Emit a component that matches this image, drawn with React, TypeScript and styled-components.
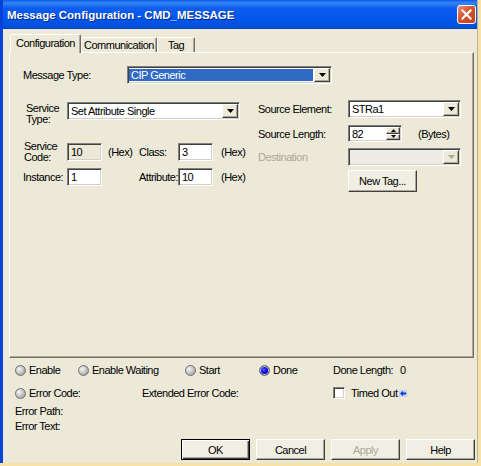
import React from "react";
import styled, { createGlobalStyle, css } from "styled-components";

const GlobalStyle = createGlobalStyle`
  html, body {
    margin: 0;
    padding: 0;
    background: #f5e2a4;
  }
  body {
    font-family: "Liberation Sans", Arial, sans-serif;
    font-size: 11px;
    letter-spacing: -0.5px;
    color: #000;
  }
`;

const sunken = css`
  box-sizing: border-box;
  border: 1px solid;
  border-color: #808080 #fff #fff #808080;
  box-shadow: inset 1px 1px #404040, inset -1px -1px #d4d0c8;
`;

const raised = css`
  box-sizing: border-box;
  border: 1px solid;
  border-color: #fff #404040 #404040 #fff;
  box-shadow: inset -1px -1px #aca899;
`;

const Window = styled.div`
  width: 478px;
  height: 463px;
  box-sizing: border-box;
  background: #ece9d8;
  border-left: 3px solid #0842d9;
  border-right: 1px solid #b9b39c;
  display: flex;
  flex-direction: column;
  overflow: hidden;
`;

const TitleBar = styled.div`
  height: 29px;
  flex: none;
  display: flex;
  align-items: center;
  justify-content: space-between;
  padding: 0 0 0 4px;
  background: linear-gradient(
    #0a5ae8 0%,
    #3784f5 10%,
    #0d5eee 28%,
    #0055ea 70%,
    #0050de 90%,
    #0043c0 100%
  );
`;

const Title = styled.span`
  color: #fff;
  font-weight: bold;
  font-size: 11.5px;
  letter-spacing: 0;
  text-shadow: 1px 1px #0a2a8a;
`;

const CloseButton = styled.div`
  width: 19px;
  height: 19px;
  margin-right: 1px;
  box-sizing: border-box;
  border: 1px solid #fff;
  border-radius: 3px;
  background: linear-gradient(135deg, #e9907a 0%, #d6532f 45%, #c2401c 100%);
  display: flex;
  align-items: center;
  justify-content: center;
`;

const TabStrip = styled.div`
  display: flex;
  align-items: flex-end;
  height: 19px;
  margin: 5px 0 0 7px;
  position: relative;
  z-index: 1;
`;

const Tab = styled.div<{ $active?: boolean; $w: number }>`
  width: ${(p) => p.$w}px;
  box-sizing: border-box;
  background: #ece9d8;
  border: 1px solid;
  border-bottom: none;
  border-color: #fff #716f64 transparent #fff;
  box-shadow: inset -1px 0 #aca899;
  border-radius: 2px 2px 0 0;
  display: flex;
  align-items: center;
  justify-content: center;
  height: ${(p) => (p.$active ? 19 : 15)}px;
  margin-bottom: ${(p) => (p.$active ? 0 : 1)}px;
  padding-bottom: ${(p) => (p.$active ? 2 : 0)}px;
`;

const Panel = styled.div`
  width: 465px;
  height: 306px;
  flex: none;
  margin: -1px 0 0 6px;
  box-sizing: border-box;
  border: 1px solid;
  border-color: #fff #716f64 #716f64 #fff;
  box-shadow: inset -1px -1px #aca899;
  padding: 13px 0 0 13px;
`;

const MessageRow = styled.div`
  display: flex;
  align-items: center;
  height: 18px;
`;

const Label = styled.span<{ $w?: number; $muted?: boolean; $pad?: number }>`
  ${(p) => (p.$w ? `width: ${p.$w}px; flex: none;` : "")}
  padding-left: ${(p) => p.$pad ?? 0}px;
  color: ${(p) => (p.$muted ? "#aca899" : "#000")};
  white-space: nowrap;
`;

const StackLabel = styled.span<{ $pad?: number; $top?: number }>`
  display: block;
  line-height: 11px;
  padding-left: ${(p) => p.$pad ?? 0}px;
  margin-top: ${(p) => p.$top ?? 0}px;
`;

const Combo = styled.div<{ $w: number; $h?: number; $disabled?: boolean }>`
  ${sunken};
  width: ${(p) => p.$w}px;
  height: ${(p) => p.$h ?? 18}px;
  padding: 1px;
  display: flex;
  background: ${(p) => (p.$disabled ? "#eeede5" : "#fff")};
`;

const ComboText = styled.div<{ $selected?: boolean }>`
  flex: 1;
  display: flex;
  align-items: center;
  padding-left: 2px;
  margin: ${(p) => (p.$selected ? "1px 1px 1px 0" : "0")};
  background: ${(p) => (p.$selected ? "#316ac5" : "transparent")};
  color: ${(p) => (p.$selected ? "#fff" : "#000")};
`;

const ArrowButton = styled.div<{ $w?: number }>`
  ${raised};
  width: ${(p) => p.$w ?? 16}px;
  flex: none;
  background: #ece9d8;
  display: flex;
  align-items: center;
  justify-content: center;
`;

const Columns = styled.div`
  display: flex;
  gap: 18px;
  margin-top: 16px;
`;

const LeftColumn = styled.div`
  width: 217px;
  padding-top: 2px;
`;

const FieldGrid = styled.div<{ $top?: number; $align?: string }>`
  display: grid;
  grid-template-columns: 44px 35px 37px 39px 35px 27px;
  align-items: ${(p) => p.$align ?? "center"};
  margin-top: ${(p) => p.$top ?? 0}px;
`;

const SpanCell = styled.div<{ $cols: string }>`
  grid-column: ${(p) => p.$cols};
`;

const TextField = styled.input<{ $disabled?: boolean; $w?: number }>`
  ${sunken};
  width: ${(p) => (p.$w ? `${p.$w}px` : "100%")};
  height: 18px;
  margin: 0;
  padding: 0 3px;
  font: inherit;
  letter-spacing: inherit;
  color: #000;
  outline: none;
  background: ${(p) => (p.$disabled ? "#ece9d8" : "#fff")};
`;

const Unit = styled.span<{ $pad: number }>`
  padding-left: ${(p) => p.$pad}px;
  white-space: nowrap;
`;

const RightColumn = styled.div`
  width: 203px;
`;

const RightRow = styled.div<{ $h: number; $top?: number }>`
  display: grid;
  grid-template-columns: 90px 113px;
  align-items: center;
  height: ${(p) => p.$h}px;
  margin-top: ${(p) => p.$top ?? 0}px;
`;

const SpinWrap = styled.div`
  display: flex;
  align-items: center;
`;

const Spin = styled.div`
  ${sunken};
  width: 54px;
  height: 17px;
  padding: 1px;
  display: flex;
  background: #fff;
`;

const SpinText = styled.div`
  flex: 1;
  display: flex;
  align-items: center;
  padding-left: 2px;
`;

const SpinButtons = styled.div`
  width: 14px;
  display: flex;
  flex-direction: column;
`;

const SpinHalf = styled.div`
  ${raised};
  flex: 1;
  background: #ece9d8;
  display: flex;
  align-items: center;
  justify-content: center;
`;

const Button = styled.div<{ $w?: number; $h?: number; $default?: boolean; $disabled?: boolean }>`
  box-sizing: border-box;
  width: ${(p) => p.$w ?? 69}px;
  height: ${(p) => p.$h ?? 21}px;
  background: #f1efe4;
  display: flex;
  align-items: center;
  justify-content: center;
  border: 1px solid;
  color: ${(p) => (p.$disabled ? "#aca899" : "#000")};
  ${(p) =>
    p.$default
      ? css`
          border-color: #000;
          box-shadow: inset 1px 1px #fff, inset -1px -1px #404040, inset -2px -2px #aca899;
        `
      : css`
          border-color: #fff #404040 #404040 #fff;
          box-shadow: inset -1px -1px #aca899;
        `}
`;

const StatusArea = styled.div`
  display: flex;
  flex-direction: column;
  padding-left: 12px;
`;

const StatusRow = styled.div<{ $top: number }>`
  display: flex;
  align-items: center;
  height: 12px;
  margin-top: ${(p) => p.$top}px;
`;

const StatusItem = styled.div<{ $w?: number }>`
  display: flex;
  align-items: center;
  ${(p) => (p.$w ? `width: ${p.$w}px; flex: none;` : "")}
  white-space: nowrap;
`;

const Led = styled.span<{ $on?: boolean }>`
  width: 11px;
  height: 11px;
  box-sizing: border-box;
  border-radius: 50%;
  margin-right: 3px;
  flex: none;
  border: 1px solid ${(p) => (p.$on ? "#6c6c6c" : "#707070")};
  background: ${(p) =>
    p.$on
      ? "radial-gradient(circle at 40% 40%, #5a5aff 0%, #0000e8 45%, #00009a 100%)"
      : "radial-gradient(circle at 35% 35%, #f6f6f6 0%, #c8c8c8 45%, #8e8e8e 100%)"};
  box-shadow: ${(p) => (p.$on ? "inset 0 0 0 1px #c4c4c4" : "none")};
`;

const CheckBox = styled.span`
  ${sunken};
  width: 12px;
  height: 12px;
  background: #fff;
  margin-right: 6px;
  flex: none;
`;

const TextLine = styled.div<{ $top: number }>`
  height: 12px;
  line-height: 12px;
  margin-top: ${(p) => p.$top}px;
`;

const ButtonRow = styled.div`
  display: flex;
  justify-content: flex-end;
  gap: 6px;
  margin-top: 7px;
  padding-right: 2px;
`;

const DownArrow = ({ color = "#000" }: { color?: string }) => (
  <svg width="7" height="4" viewBox="0 0 7 4">
    <path d="M0 0H7L3.5 4Z" fill={color} />
  </svg>
);

const SpinArrow = ({ up }: { up?: boolean }) => (
  <svg width="5" height="3" viewBox="0 0 5 3">
    <path d={up ? "M0 3H5L2.5 0Z" : "M0 0H5L2.5 3Z"} fill="#000" />
  </svg>
);

const BackArrow = () => (
  <svg width="8" height="7" viewBox="0 0 8 7" style={{ marginLeft: 2 }}>
    <rect width="8" height="7" fill="#c9d2ea" />
    <path d="M1 3.5L4 0.8V2.6H7.2V4.4H4V6.2Z" fill="#0a3ce0" />
  </svg>
);

const CloseGlyph = () => (
  <svg width="11" height="11" viewBox="0 0 11 11">
    <path d="M1.5 1.5L9.5 9.5M9.5 1.5L1.5 9.5" stroke="#fff" strokeWidth="2.2" strokeLinecap="square" />
  </svg>
);

export default function App() {
  return (
    <>
      <GlobalStyle />
      <Window>
        <TitleBar>
          <Title>Message Configuration - CMD_MESSAGE</Title>
          <CloseButton>
            <CloseGlyph />
          </CloseButton>
        </TitleBar>

        <TabStrip>
          <Tab $active $w={71}>Configuration</Tab>
          <Tab $w={76}>Communication</Tab>
          <Tab $w={38}>Tag</Tab>
        </TabStrip>

        <Panel>
          <MessageRow>
            <Label $w={104}>Message Type:</Label>
            <Combo $w={205}>
              <ComboText $selected>CIP Generic</ComboText>
              <ArrowButton>
                <DownArrow />
              </ArrowButton>
            </Combo>
          </MessageRow>

          <Columns>
            <LeftColumn>
              <FieldGrid $align="start">
                <div>
                  <StackLabel $pad={3} $top={1}>Service</StackLabel>
                  <StackLabel $pad={3}>Type:</StackLabel>
                </div>
                <SpanCell $cols="2 / 7">
                  <Combo $w={173}>
                    <ComboText>Set Attribute Single</ComboText>
                    <ArrowButton>
                      <DownArrow />
                    </ArrowButton>
                  </Combo>
                </SpanCell>
              </FieldGrid>

              <FieldGrid $top={16}>
                <div>
                  <StackLabel $pad={1}>Service</StackLabel>
                  <StackLabel $pad={1}>Code:</StackLabel>
                </div>
                <TextField $disabled readOnly value="10" />
                <Unit $pad={6}>(Hex)</Unit>
                <Label>Class:</Label>
                <TextField readOnly value="3" />
                <Unit $pad={8}>(Hex)</Unit>
              </FieldGrid>

              <FieldGrid $top={5}>
                <Label>Instance:</Label>
                <TextField readOnly value="1" />
                <span />
                <Label>Attribute:</Label>
                <TextField readOnly value="10" />
                <Unit $pad={8}>(Hex)</Unit>
              </FieldGrid>
            </LeftColumn>

            <RightColumn>
              <RightRow $h={18}>
                <Label>Source Element:</Label>
                <Combo $w={113}>
                  <ComboText>STRa1</ComboText>
                  <ArrowButton>
                    <DownArrow />
                  </ArrowButton>
                </Combo>
              </RightRow>

              <RightRow $h={17} $top={7}>
                <Label>Source Length:</Label>
                <SpinWrap>
                  <Spin>
                    <SpinText>82</SpinText>
                    <SpinButtons>
                      <SpinHalf>
                        <SpinArrow up />
                      </SpinHalf>
                      <SpinHalf>
                        <SpinArrow />
                      </SpinHalf>
                    </SpinButtons>
                  </Spin>
                  <Unit $pad={16}>(Bytes)</Unit>
                </SpinWrap>
              </RightRow>

              <RightRow $h={18} $top={6}>
                <Label $muted>Destination</Label>
                <Combo $w={113} $disabled>
                  <ComboText />
                  <ArrowButton>
                    <DownArrow color="#aca899" />
                  </ArrowButton>
                </Combo>
              </RightRow>

              <RightRow $h={22} $top={4}>
                <span />
                <Button $w={69} $h={22}>New Tag...</Button>
              </RightRow>
            </RightColumn>
          </Columns>
        </Panel>

        <StatusArea>
          <StatusRow $top={6}>
            <StatusItem $w={63}>
              <Led />
              Enable
            </StatusItem>
            <StatusItem $w={107}>
              <Led />
              Enable Waiting
            </StatusItem>
            <StatusItem $w={74}>
              <Led />
              Start
            </StatusItem>
            <StatusItem $w={74}>
              <Led $on />
              Done
            </StatusItem>
            <StatusItem $w={67}>Done Length:</StatusItem>
            <StatusItem>0</StatusItem>
          </StatusRow>

          <StatusRow $top={11}>
            <StatusItem $w={127}>
              <Led />
              Error Code:
            </StatusItem>
            <StatusItem $w={191}>Extended Error Code:</StatusItem>
            <StatusItem>
              <CheckBox />
              Timed Out
              <BackArrow />
            </StatusItem>
          </StatusRow>

          <TextLine $top={6}>Error Path:</TextLine>
          <TextLine $top={3}>Error Text:</TextLine>
        </StatusArea>

        <ButtonRow>
          <Button $default>OK</Button>
          <Button>Cancel</Button>
          <Button $disabled>Apply</Button>
          <Button>Help</Button>
        </ButtonRow>
      </Window>
    </>
  );
}
